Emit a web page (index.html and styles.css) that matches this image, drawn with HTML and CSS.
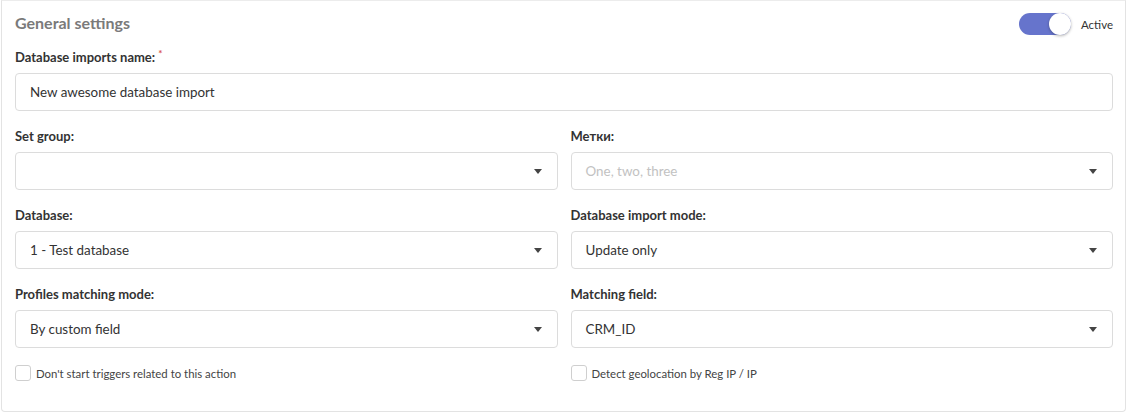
FILE: index.html
```html
<!DOCTYPE html>
<html lang="en">
<head>
  <meta charset="UTF-8" />
  <title>General settings</title>
  <link rel="stylesheet" href="styles.css">
</head>
<body>
  <div class="card">
    <div class="card-header">
      <h2 class="card-title">General settings</h2>
      <label class="switch">
        <span class="switch-track"><span class="switch-knob"></span></span>
        <span class="switch-label">Active</span>
      </label>
    </div>

    <div class="field">
      <label class="field-label">Database imports name: <span class="required">*</span></label>
      <div class="input">New awesome database import</div>
    </div>

    <div class="grid">
      <div class="field">
        <label class="field-label">Set group:</label>
        <div class="input select"><span></span><i class="caret"></i></div>
      </div>
      <div class="field">
        <label class="field-label">Метки:</label>
        <div class="input select"><span class="placeholder">One, two, three</span><i class="caret"></i></div>
      </div>

      <div class="field">
        <label class="field-label">Database:</label>
        <div class="input select"><span>1 - Test database</span><i class="caret"></i></div>
      </div>
      <div class="field">
        <label class="field-label">Database import mode:</label>
        <div class="input select"><span>Update only</span><i class="caret"></i></div>
      </div>

      <div class="field">
        <label class="field-label">Profiles matching mode:</label>
        <div class="input select"><span>By custom field</span><i class="caret"></i></div>
      </div>
      <div class="field">
        <label class="field-label">Matching field:</label>
        <div class="input select"><span>CRM_ID</span><i class="caret"></i></div>
      </div>

      <label class="check"><span class="check-box"></span>Don't start triggers related to this action</label>
      <label class="check"><span class="check-box"></span>Detect geolocation by Reg IP / IP</label>
    </div>
  </div>
</body>
</html>
```

FILE: styles.css
```css
body {
  margin: 0;
  font-family: 'Lato', 'Liberation Sans', sans-serif;
  color: #333;
  background: #fff;
}

.card {
  margin: 0 1px;
  height: 412px;
  box-sizing: border-box;
  border: 1px solid #e3e3e3;
  border-top-color: #ececec;
  border-radius: 0 0 4px 4px;
  padding: 9px 12px 0 12px;
}

.card-header {
  display: flex;
  justify-content: space-between;
  align-items: center;
  height: 28px;
  margin-bottom: 10px;
}
.card-title {
  margin: 0 0 0 1px;
  font-size: 16px;
  font-weight: 700;
  color: #7a7a7a;
  position: relative;
  top: -2px;
}

.switch {
  display: flex;
  align-items: center;
  gap: 10px;
  margin-right: -12px;
  padding-right: 12px;
}
.switch-track {
  width: 52px;
  height: 22px;
  border-radius: 11px;
  background: #6674cc;
  position: relative;
}
.switch-knob {
  position: absolute;
  right: 0;
  top: 0;
  width: 22px;
  height: 22px;
  border-radius: 50%;
  background: #fff;
  box-shadow: 0 1px 3px rgba(0,0,0,0.3);
}
.switch-label {
  font-size: 11.5px;
  color: #333;
}

.field-label {
  display: block;
  font-size: 13px;
  font-weight: 700;
  line-height: 18px;
  margin: 0 0 7px 1px;
  color: #333;
}
.required {
  color: #d9534f;
  font-size: 10px;
  vertical-align: top;
  position: relative;
  top: -4px;
}

.input {
  height: 38px;
  box-sizing: border-box;
  border: 1px solid #dcdcdc;
  border-radius: 4px;
  margin-left: 1px;
  padding: 0 14px 0 14px;
  font-size: 13.4px;
  line-height: 36px;
  color: #333;
}
.field {
  margin-bottom: 16px;
}
.select {
  display: flex;
  justify-content: space-between;
  align-items: center;
}
.placeholder {
  color: #c2c2c2;
}
.caret {
  width: 0;
  height: 0;
  border-left: 4px solid transparent;
  border-right: 4px solid transparent;
  border-top: 5px solid #444;
  margin-right: 1px;
}

.grid {
  display: grid;
  grid-template-columns: 1fr 1fr;
  column-gap: 12px;
}

.check {
  display: flex;
  align-items: center;
  gap: 5px;
  margin-top: 1px;
  margin-left: 1px;
  font-size: 11.4px;
  color: #444;
}
.check-box {
  width: 16px;
  height: 16px;
  box-sizing: border-box;
  border: 1px solid #cfcfcf;
  border-radius: 3px;
  background: #fff;
}
```
